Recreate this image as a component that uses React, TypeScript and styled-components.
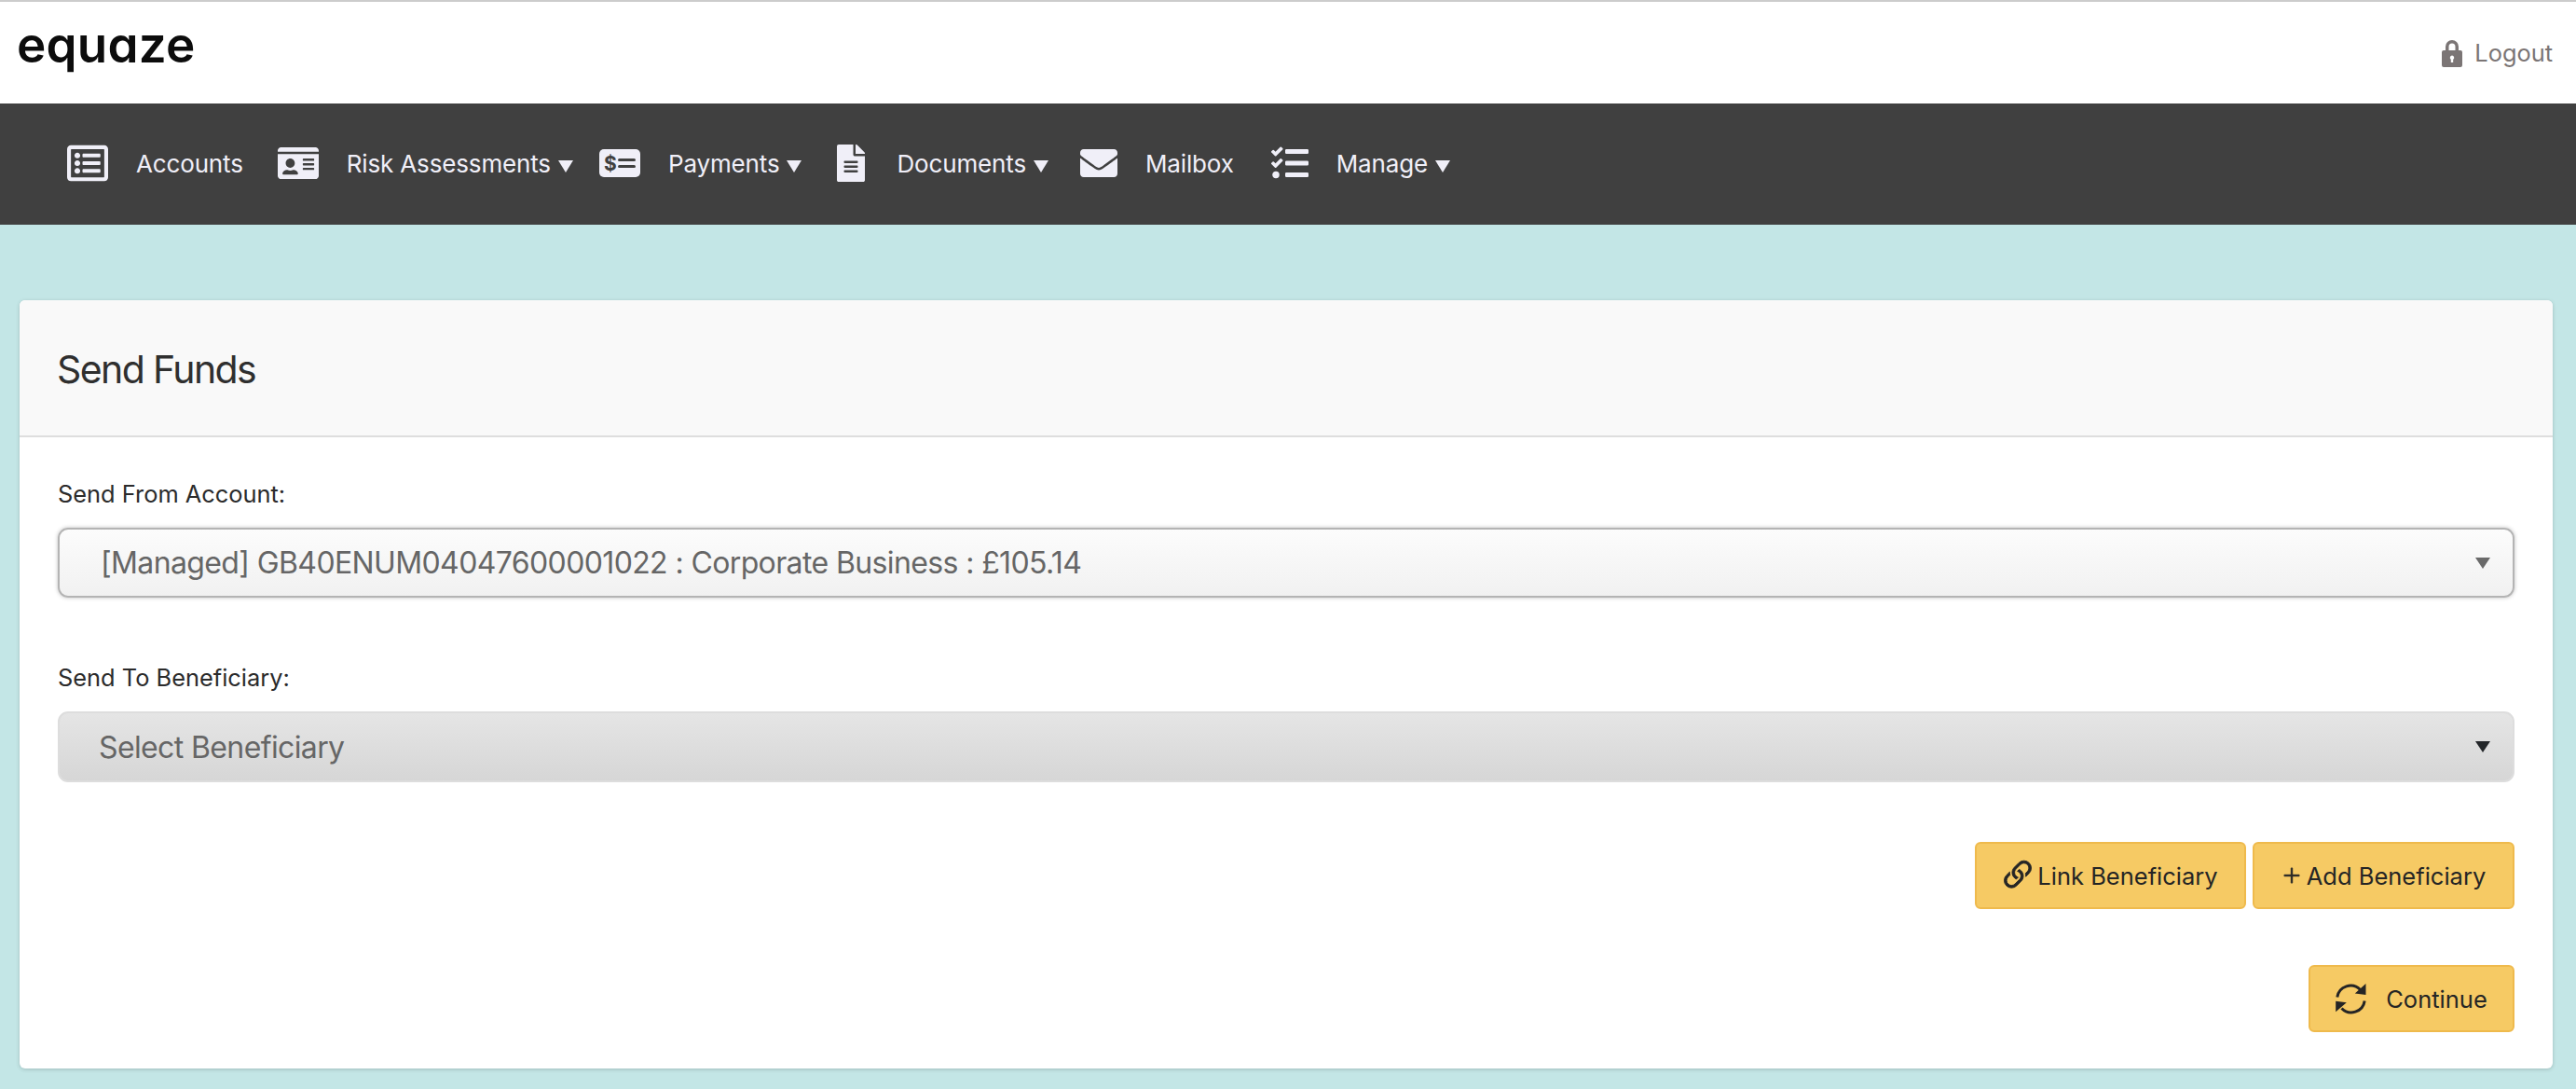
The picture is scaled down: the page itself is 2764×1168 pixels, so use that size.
import React from "react";
import styled, { createGlobalStyle } from "styled-components";
import { FaRegListAlt, FaIdCard, FaFileAlt, FaEnvelope, FaTasks } from "react-icons/fa";
import { BsLink45Deg, BsPlusLg } from "react-icons/bs";

const Global = createGlobalStyle`
  html, body { margin: 0; padding: 0; background: #c3e6e6; }
  body { font-family: Inter, "Liberation Sans", sans-serif; overflow: hidden; }
  * { box-sizing: border-box; }
`;

const Page = styled.div`
  height: 1168px;
  display: flex;
  flex-direction: column;
`;

const Header = styled.header`
  height: 111px;
  background: #fff;
  border-top: 2px solid #ccc;
  display: flex;
  justify-content: space-between;
  align-items: center;
  padding: 0 25px 0 18px;
`;

const Logo = styled.div`
  font-family: Inter, sans-serif;
  font-feature-settings: "cv11" 1;
  font-size: 53px;
  font-weight: 600;
  letter-spacing: 0.2px;
  line-height: 1;
  color: #0c0c0c;
  margin-top: -16px;
`;

const LogoutLink = styled.div`
  display: flex;
  align-items: center;
  gap: 13px;
  font-size: 25.4px;
  color: #7b7575;
`;

const Nav = styled.nav`
  height: 130px;
  background: #404040;
  display: flex;
  align-items: center;
  padding: 0 0 2px 72px;
`;

const NavItem = styled.div<{ $after: number }>`
  display: flex;
  align-items: center;
  gap: 30px;
  margin-right: ${(p) => p.$after}px;
  color: #f0eff8;
  font-size: 26px;
  letter-spacing: -0.15px;
`;

const NavIcon = styled.span<{ $w: number }>`
  width: ${(p) => p.$w}px;
  display: flex;
  justify-content: flex-start;
  align-items: center;
  height: 40px;
`;

const Caret = styled.span`
  display: inline-block;
  width: 0;
  height: 0;
  margin-left: 8px;
  vertical-align: 0;
  border-left: 8px solid transparent;
  border-right: 8px solid transparent;
  border-top: 13px solid #f0eff8;
`;

const Main = styled.main`
  flex: 1;
  padding: 81px 25px 22px 21px;
  display: flex;
`;

const Card = styled.section`
  flex: 1;
  background: #fff;
  border-radius: 6px;
  box-shadow: 0 1px 4px rgba(0, 0, 0, 0.18);
  display: flex;
  flex-direction: column;
  overflow: hidden;
`;

const CardHeader = styled.div`
  height: 147px;
  background: #f9f9f9;
  border-bottom: 2px solid #dedede;
  display: flex;
  align-items: center;
  padding: 2px 0 0 40px;
  font-size: 41px;
  letter-spacing: -1.6px;
  color: #2f2f2f;
`;

const CardBody = styled.div`
  padding: 46px 41px 0;
  display: flex;
  flex-direction: column;
`;

const Field = styled.div`
  display: flex;
  flex-direction: column;
  gap: 21px;
  margin-bottom: 71px;
`;

const Label = styled.div`
  font-size: 25.4px;
  line-height: 30px;
  color: #2b2b2b;
`;

const Select = styled.div<{ $disabled?: boolean }>`
  height: ${(p) => (p.$disabled ? 76 : 75)}px;
  border-radius: 11px;
  display: flex;
  align-items: center;
  justify-content: space-between;
  padding: 0 24px 0 ${(p) => (p.$disabled ? 42 : 44)}px;
  font-size: 32px;
  letter-spacing: -0.62px;
  color: #666;
  background: ${(p) =>
    p.$disabled ? "linear-gradient(#e5e5e5, #d6d6d6)" : "linear-gradient(#fcfcfc, #f1f1f1)"};
  border: 2px solid ${(p) => (p.$disabled ? "#dddddd" : "#b4b4b4")};
  box-shadow: ${(p) => (p.$disabled ? "none" : "0 0 4px rgba(0,0,0,0.25)")};
`;

const SelectCaret = styled.span<{ $dark?: boolean }>`
  width: 0;
  height: 0;
  border-left: 8px solid transparent;
  border-right: 8px solid transparent;
  border-top: 12px solid ${(p) => (p.$dark ? "#24272a" : "#6a6a6a")};
`;

const ButtonRow = styled.div<{ $top: number }>`
  display: flex;
  justify-content: flex-end;
  gap: 7px;
  margin-top: ${(p) => p.$top}px;
`;

const Button = styled.button<{ $gap: number; $w: number }>`
  height: 72px;
  width: ${(p) => p.$w}px;
  background: #f6ca64;
  border: 2px solid #efba4c;
  border-radius: 6px;
  display: flex;
  align-items: center;
  justify-content: center;
  gap: ${(p) => p.$gap}px;
  font-family: inherit;
  font-size: 25.5px;
  color: #252525;
  padding: 0;
`;

const LinkGlyph = styled(BsLink45Deg)`
  margin: -5px;
  stroke: currentColor;
  stroke-width: 0.35;
`;

const PlusGlyph = styled(BsPlusLg)`
  stroke: currentColor;
  stroke-width: 0.7;
`;

const LockIcon = () => (
  <svg width="22" height="31" viewBox="0 0 22 31">
    <path
      fill="#7b7575"
      fillRule="evenodd"
      d="M4 13V9a7 7 0 0 1 14 0v4h2a2 2 0 0 1 2 2v14a2 2 0 0 1-2 2H2a2 2 0 0 1-2-2V15a2 2 0 0 1 2-2zm3.500 0h7V9a3.500 3.500 0 0 0-7 0zM11 18.500a2.300 2.300 0 0 0-1.200 4.200V26h2.400v-3.300a2.300 2.300 0 0 0-1.200-4.200z"
    />
  </svg>
);

const PaymentsIcon = () => (
  <svg width="44" height="30" viewBox="0 0 44 30">
    <rect width="44" height="30" rx="5" fill="#f0eff8" />
    <text x="5" y="22.500" fontSize="21" fontWeight="700" fontFamily="Inter, sans-serif" fill="#404040">
      $
    </text>
    <rect x="20" y="10" width="19" height="3" rx="1.500" fill="#404040" />
    <rect x="20" y="17" width="19" height="3" rx="1.500" fill="#404040" />
  </svg>
);

const SyncIcon = () => (
  <svg width="33" height="33" viewBox="0 0 33 33" fill="none">
    <path d="M1.800 14.500A14.500 14.500 0 0 1 26.500 6.500" stroke="#252525" strokeWidth="3" />
    <path d="M32.500 0V12L20.800 10.500Z" fill="#252525" />
    <path d="M31.200 18.500A14.500 14.500 0 0 1 6.500 26.500" stroke="#252525" strokeWidth="3" />
    <path d="M0.200 18.700L11.800 20.300L0.200 30.300Z" fill="#252525" />
  </svg>
);

const navItems = [
  { label: "Accounts", icon: <FaRegListAlt size={44} />, w: 44, after: 37, caret: false },
  { label: "Risk Assessments", icon: <FaIdCard size={44} />, w: 44, after: 28, caret: true },
  { label: "Payments", icon: <PaymentsIcon />, w: 44, after: 34, caret: true },
  { label: "Documents", icon: <FaFileAlt size={40} />, w: 38, after: 34, caret: true },
  { label: "Mailbox", icon: <FaEnvelope size={40} />, w: 40, after: 40, caret: false },
  { label: "Manage", icon: <FaTasks size={40} />, w: 40, after: 0, caret: true },
];

export default function App() {
  return (
    <Page>
      <Global />
      <Header>
        <Logo>equaze</Logo>
        <LogoutLink>
          <LockIcon />
          Logout
        </LogoutLink>
      </Header>
      <Nav>
        {navItems.map((item) => (
          <NavItem key={item.label} $after={item.after}>
            <NavIcon $w={item.w}>{item.icon}</NavIcon>
            <span>
              {item.label}
              {item.caret && <Caret />}
            </span>
          </NavItem>
        ))}
      </Nav>
      <Main>
        <Card>
          <CardHeader>Send Funds</CardHeader>
          <CardBody>
            <Field>
              <Label>Send From Account:</Label>
              <Select>
                [Managed] GB40ENUM04047600001022 : Corporate Business : £105.14
                <SelectCaret />
              </Select>
            </Field>
            <Field>
              <Label>Send To Beneficiary:</Label>
              <Select $disabled>
                Select Beneficiary
                <SelectCaret $dark />
              </Select>
            </Field>
            <ButtonRow $top={-7}>
              <Button $gap={5} $w={291}>
                <LinkGlyph size={42} />
                Link Beneficiary
              </Button>
              <Button $gap={5} $w={281}>
                <PlusGlyph size={22} />
                Add Beneficiary
              </Button>
            </ButtonRow>
            <ButtonRow $top={60}>
              <Button $gap={21} $w={221}>
                <SyncIcon />
                Continue
              </Button>
            </ButtonRow>
          </CardBody>
        </Card>
      </Main>
    </Page>
  );
}
